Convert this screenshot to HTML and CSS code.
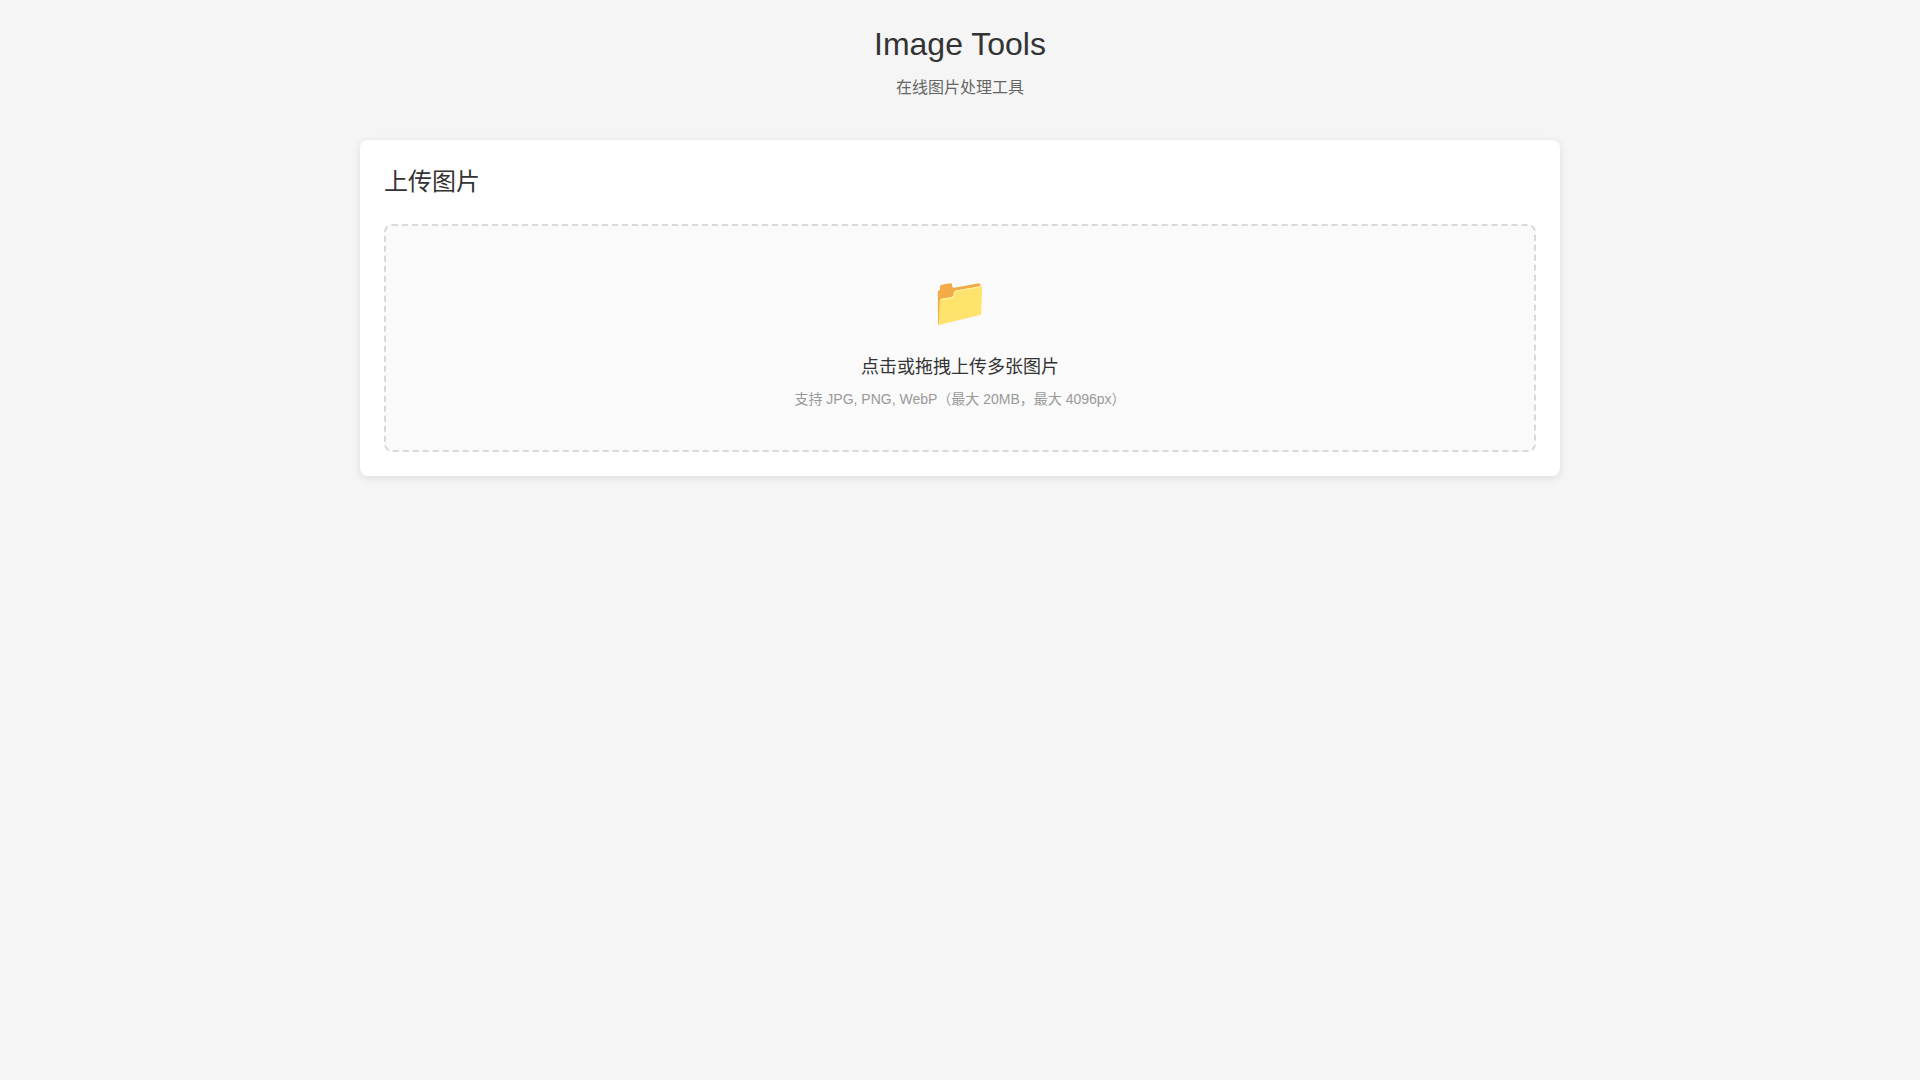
FILE: index.html
```html
<!DOCTYPE html>
<html lang="zh-CN">

<head>
    <meta charset="utf-8">
    <meta name="viewport" content="width=device-width, initial-scale=1">
    <title>Image Tools</title>
    <link rel="stylesheet" href="styles.css">
</head>

<body>
    <div class="container">
        <header class="header">
            <h1>Image Tools</h1>
            <p>在线图片处理工具</p>
        </header>

        <main class="card">
            <h2>上传图片</h2>

            <label class="upload-area" for="file-input">
                <input class="file-input" id="file-input" type="file" accept="image/jpeg,image/png,image/webp" multiple>
                <span class="upload-icon">📁</span>
                <span class="upload-text">点击或拖拽上传多张图片</span>
                <span class="upload-hint">支持 JPG, PNG, WebP（最大 20MB，最大 4096px）</span>
            </label>
        </main>
    </div>
</body>

</html>
```
FILE: styles.css
```css
* {
    margin: 0;
    padding: 0;
    box-sizing: border-box;
}

body {
    font-family: "Liberation Sans", "Noto Sans CJK SC", sans-serif;
    background: #f5f5f5;
    color: #333;
    line-height: 1.5;
}

.container {
    max-width: 1240px;
    margin: 0 auto;
    padding: 20px;
}

.header {
    margin-bottom: 40px;
    text-align: center;
}

h1 {
    margin-bottom: 8px;
    font-size: 32px;
    font-weight: 400;
}

.header p {
    color: #666;
    font-size: 16px;
}

.card {
    padding: 24px;
    background: #fff;
    border-radius: 8px;
    box-shadow: 0 2px 8px rgba(0, 0, 0, 0.1);
}

h2 {
    margin-bottom: 24px;
    font-size: 24px;
    font-weight: 400;
}

.upload-area {
    display: block;
    padding: 40px;
    background: #fafafa;
    border: 2px dashed #d9d9d9;
    border-radius: 8px;
    text-align: center;
    cursor: pointer;
}

.file-input {
    display: none;
}

.upload-icon {
    display: block;
    margin-bottom: 16px;
    font-size: 48px;
}

.upload-text {
    display: block;
    margin-bottom: 8px;
    font-size: 18px;
}

.upload-hint {
    display: block;
    color: #999;
    font-size: 14px;
}
```
